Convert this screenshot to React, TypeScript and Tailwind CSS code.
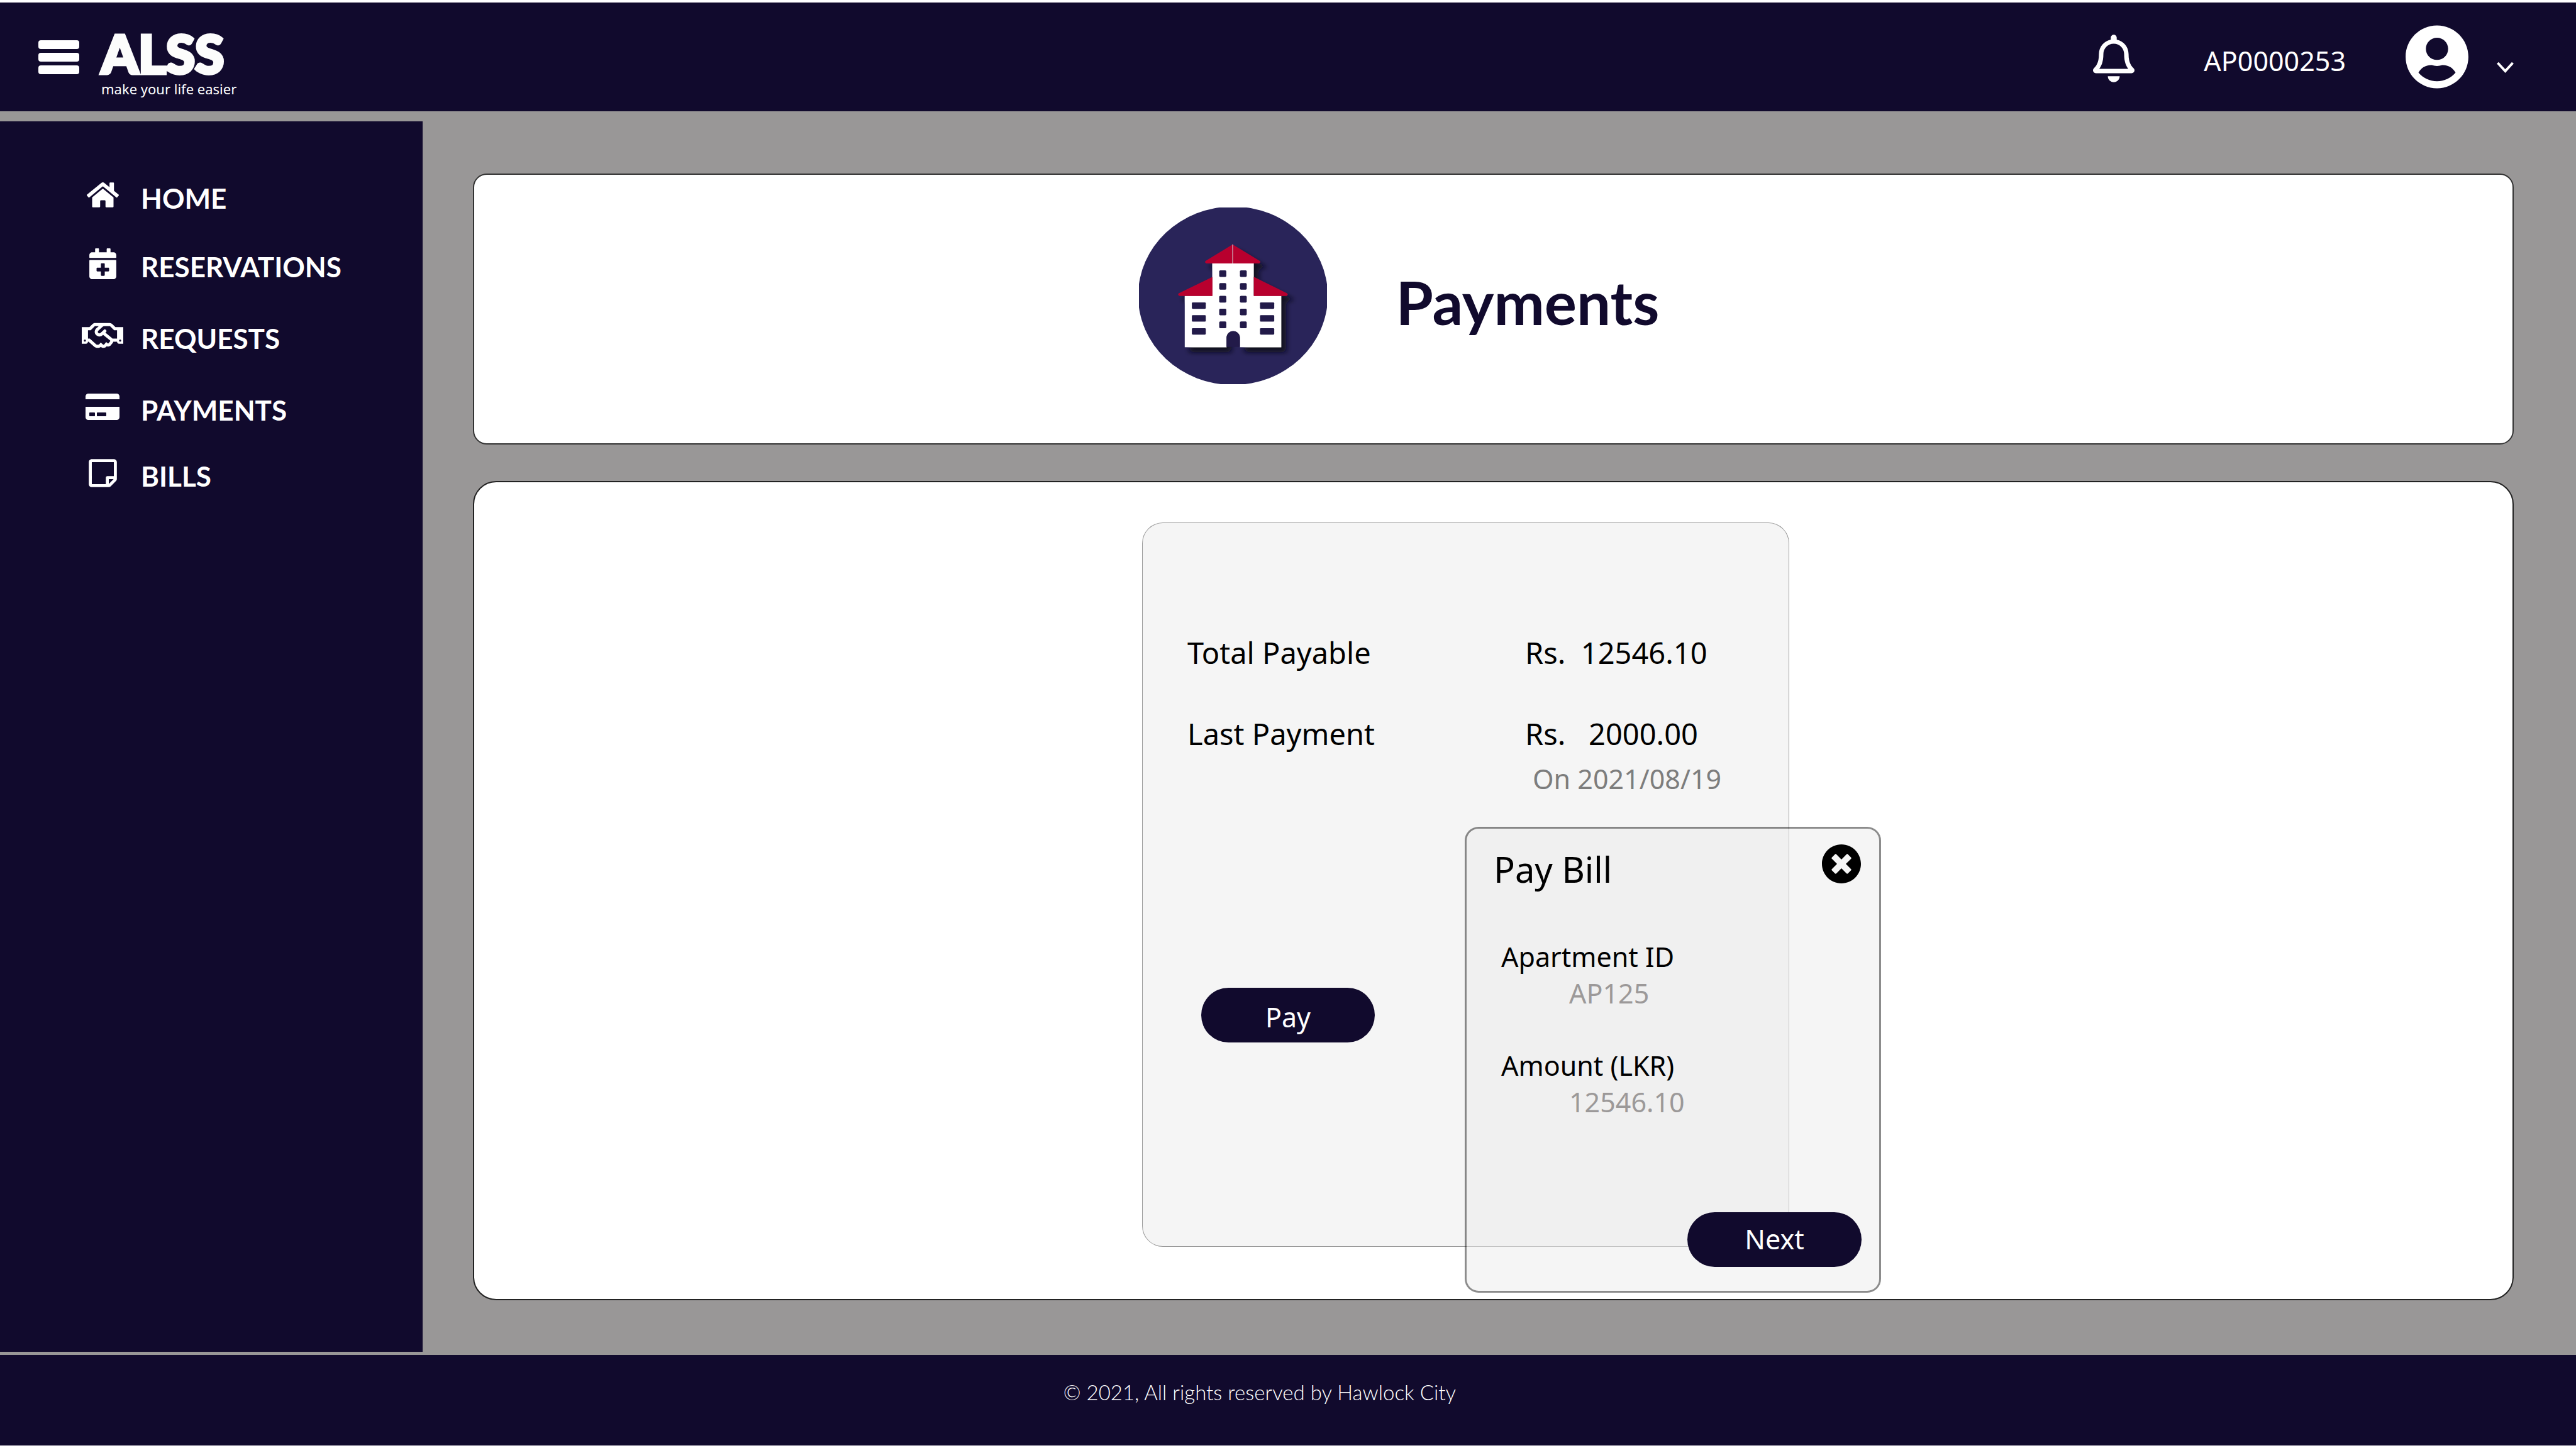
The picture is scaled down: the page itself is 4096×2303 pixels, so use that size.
import React from "react";
import {
  FaCalendarPlus,
  FaCreditCard,
  FaHome,
  FaRegBell,
  FaRegHandshake,
  FaRegStickyNote,
  FaTimesCircle,
  FaUserCircle,
} from "react-icons/fa";

const navItems = [
  { label: "HOME", row: "h-[109px]", icon: <FaHome className="h-[46px] w-[51px]" /> },
  { label: "RESERVATIONS", row: "h-[114px]", icon: <FaCalendarPlus className="h-[49px] w-[43px]" /> },
  { label: "REQUESTS", row: "h-[114px]", icon: <FaRegHandshake className="h-[53px] w-[66px]" /> },
  { label: "PAYMENTS", row: "h-[105px]", icon: <FaCreditCard className="h-[48px] w-[54px]" /> },
  { label: "BILLS", row: "h-[105px]", icon: <FaRegStickyNote className="h-[51px] w-[45px]" /> },
];

function Header() {
  return (
    <header className="flex h-[173px] items-center bg-[#110a2d] pr-[99px] pl-[61px] text-white">
      <button type="button" aria-label="Toggle menu" className="flex w-[65px] flex-col gap-[6px]">
        <span className="h-[14px] rounded-[4px] bg-white" />
        <span className="h-[14px] rounded-[4px] bg-white" />
        <span className="h-[14px] rounded-[4px] bg-white" />
      </button>
      <a href="#" className="ml-[35px] flex flex-col self-start pt-[48px]">
        <span className="font-['Lato',sans-serif] text-[84px] leading-[66px] font-black text-[#fcfcfc] [-webkit-text-stroke:5px_#fcfcfc]">
          ALSS
        </span>
        <span className="text-[22px] leading-[46px]">make your life easier</span>
      </a>
      <div className="ml-auto flex items-center">
        <button type="button" aria-label="Notifications" className="mt-1">
          <FaRegBell className="h-[76px] w-[66px]" />
        </button>
        <span className="ml-[110px] pt-3 text-[43px] leading-[60px]">AP0000253</span>
        <button type="button" aria-label="Account menu" className="ml-[95px] flex items-center gap-[45px]">
          <FaUserCircle className="h-[103px] w-[100px]" />
          <svg viewBox="0 0 27 18" className="mt-8 h-[18px] w-[27px]" fill="none" stroke="currentColor" strokeWidth="4">
            <path d="M1.5 2 13.5 15 25.5 2" />
          </svg>
        </button>
      </div>
    </header>
  );
}

function Sidebar() {
  return (
    <nav aria-label="Main" className="w-[672px] shrink-0 bg-[#110a2d] pt-[87px] pl-[130px] text-white">
      <ul>
        {navItems.map((item) => (
          <li key={item.label} className={item.row}>
            <a href="#" className="flex h-[60px] items-center gap-[28px]">
              <span className="flex w-[66px] justify-center">{item.icon}</span>
              <span className="pt-[10px] font-['Lato',sans-serif] text-[44px] leading-[52px] font-bold">
                {item.label}
              </span>
            </a>
          </li>
        ))}
      </ul>
    </nav>
  );
}

const towerWindowRows = [532, 617, 702, 787, 872];
const wingWindowRows = [745, 830, 916];

function BuildingLogo() {
  return (
    <svg
      viewBox="160 115 1162 1173"
      preserveAspectRatio="none"
      className="h-[281px] w-[299px]"
      role="img"
      aria-label="Apartment building"
    >
      <defs>
        <filter id="buildingShadow" x="-20%" y="-20%" width="150%" height="150%">
          <feDropShadow dx="30" dy="34" stdDeviation="16" floodColor="#0a0a14" floodOpacity="0.9" />
        </filter>
      </defs>
      <ellipse cx="741" cy="701" rx="586" ry="592" fill="#292459" />
      <g filter="url(#buildingShadow)">
        <path fill="#fff" d="M613 486H869V702H1039V1043H784V975a41 38 0 0 0-83 0V1043H443V702H613Z" />
        <path
          fill="#b8002e"
          d="M736 362V486H576Q563 480 572 470ZM742 362V486H902Q916 480 906 470ZM614 576V703H412Q396 696 406 685ZM870 576V703H1070Q1085 696 1075 685Z"
        />
      </g>
      <path fill="#e48aa0" d="M736 360h6v126h-6z" />
      <g fill="#221a49">
        <path d="M701 1041V980a41 44 0 0 1 83 0V1041Z" />
        {towerWindowRows.map((y) => (
          <React.Fragment key={y}>
            <rect x="656" y={y} width="44" height="44" rx="7" />
            <rect x="784" y={y} width="42" height="44" rx="7" />
          </React.Fragment>
        ))}
        {wingWindowRows.map((y) => (
          <React.Fragment key={y}>
            <rect x="487" y={y} width="86" height="43" rx="6" />
            <rect x="908" y={y} width="88" height="43" rx="6" />
          </React.Fragment>
        ))}
      </g>
    </svg>
  );
}

function Field({ id, label, value }: { id: string; label: string; value: string }) {
  return (
    <div className="flex flex-col">
      <label htmlFor={id} className="text-[43px] leading-[58px] text-black">
        {label}
      </label>
      <input
        id={id}
        defaultValue={value}
        className="ml-[108px] w-[260px] bg-transparent text-[43px] leading-[58px] text-[#9c9999] outline-none"
      />
    </div>
  );
}

function PayBillDialog() {
  return (
    <section
      role="dialog"
      aria-labelledby="pay-bill-title"
      className="absolute top-[483px] left-[512px] flex h-[741px] w-[662px] flex-col rounded-[22px] border-[3px] border-black/45 bg-[#ebebeb]/50 bg-clip-padding pr-[28px] pb-[38px] pl-[43px]"
    >
      <div className="flex justify-between pt-[24px]">
        <h2 id="pay-bill-title" className="text-[56px] leading-[80px] text-black">
          Pay Bill
        </h2>
        <button type="button" aria-label="Close" className="self-start text-black">
          <FaTimesCircle className="size-[64px]" />
        </button>
      </div>
      <div className="mt-[71px] flex flex-col gap-[57px] pl-[12px]">
        <Field id="apartment-id" label="Apartment ID" value="AP125" />
        <Field id="amount" label="Amount (LKR)" value="12546.10" />
      </div>
      <button
        type="button"
        className="mt-auto h-[87px] w-[277px] self-end rounded-full bg-[#110a2d] text-[43px] text-white"
      >
        Next
      </button>
    </section>
  );
}

function PaymentSummary() {
  return (
    <div className="relative h-[1152px] w-[1029px] rounded-[33px] border border-black/40 bg-[#ebebeb]/50 bg-clip-padding">
      <dl className="grid grid-cols-[537px_1fr] pt-[170px] pl-[71px] text-[47px] leading-[72px] text-black">
        <dt>Total Payable</dt>
        <dd className="whitespace-pre">{"Rs.  12546.10"}</dd>
        <dt className="mt-[57px]">Last Payment</dt>
        <dd className="mt-[57px] whitespace-pre">
          {"Rs.   2000.00"}
          <span className="block pl-3 text-[43px] text-[#7d7d7d]">On 2021/08/19</span>
        </dd>
      </dl>
      <button
        type="button"
        className="mt-[296px] ml-[93px] h-[87px] w-[276px] rounded-full bg-[#110a2d] pt-[8px] text-[43px] text-white"
      >
        Pay
      </button>
      <PayBillDialog />
    </div>
  );
}

export default function App() {
  return (
    <div className="flex min-h-screen flex-col border-y-4 border-white bg-[#999797] font-['Noto_Sans',sans-serif]">
      <Header />
      <div className="flex grow pt-[16px] pb-[5px]">
        <Sidebar />
        <main className="mr-[99px] ml-[80px] flex grow flex-col gap-[58px] pt-[83px] pb-[82px]">
          <section className="flex h-[431px] justify-center rounded-[22px] border-2 border-[#333] bg-white pt-[52px] pr-[300px]">
            <BuildingLogo />
            <h1 className="ml-[110px] pt-[94px] font-['Lato',sans-serif] text-[96px] leading-[112px] font-bold text-[#110a2d]">
              Payments
            </h1>
          </section>
          <section className="flex grow justify-center rounded-[37px] border-2 border-[#222] bg-white pt-[64px] pr-[88px]">
            <PaymentSummary />
          </section>
        </main>
      </div>
      <footer className="h-[144px] bg-[#110a2d] pt-[39px] pr-[90px] text-center font-['Lato',sans-serif] text-[33px] leading-[40px] font-light text-white">
        © 2021, All rights reserved by Hawlock City
      </footer>
    </div>
  );
}
